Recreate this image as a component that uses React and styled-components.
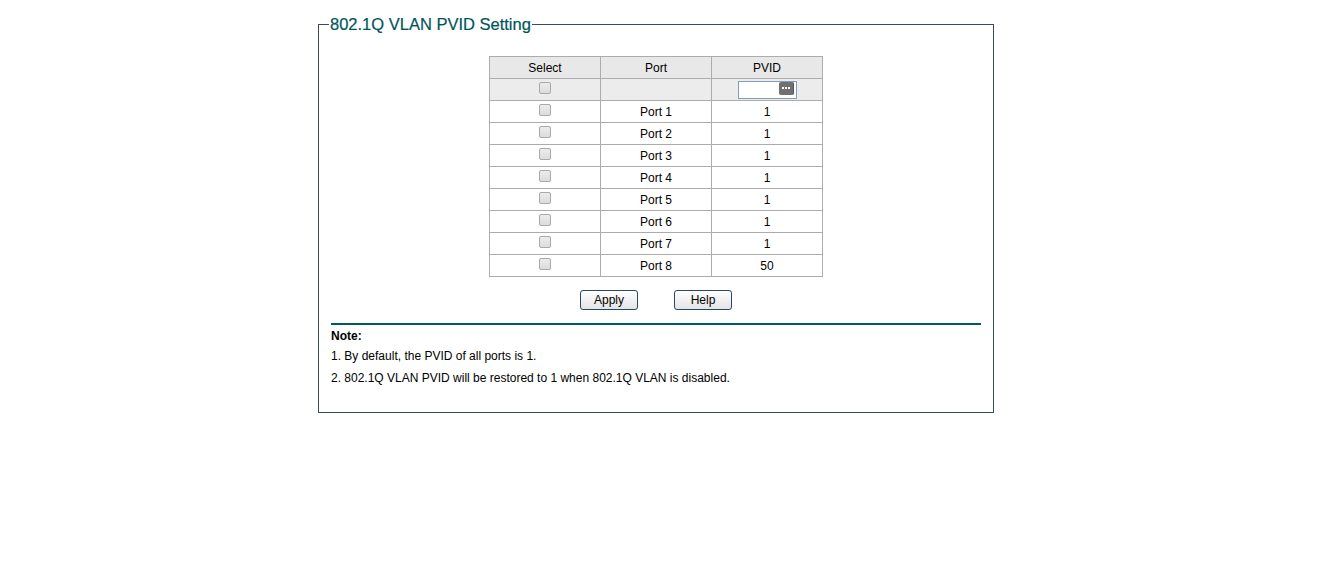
import styled, { createGlobalStyle } from "styled-components";

const GlobalStyle = createGlobalStyle`
  body {
    margin: 0;
    background: #ffffff;
    font-family: "Liberation Sans", Arial, sans-serif;
    font-size: 12px;
    color: #000000;
  }
`;

const Page = styled.div`
  padding: 14px 0 0 318px;
`;

const Panel = styled.fieldset`
  box-sizing: border-box;
  width: 676px;
  margin: 0;
  padding: 0 12px 23px;
  border: 1px solid #3c4a55;
`;

const Legend = styled.legend`
  margin-left: -2px;
  padding: 0 1px;
  font-size: 16.5px;
  line-height: 20px;
  color: #00555c;
  -webkit-text-stroke: 0.2px #00555c;
`;

const TableWrap = styled.div`
  display: flex;
  justify-content: center;
  padding-top: 22px;
`;

const Table = styled.table`
  width: 334px;
  border-collapse: collapse;
  table-layout: fixed;
`;

const Cell = styled.td`
  height: 21px;
  padding: 0;
  border: 1px solid #acacac;
  text-align: center;
  vertical-align: middle;
  line-height: 14px;
  background: ${(props) => (props.$shade ? "#ececec" : "#ffffff")};
`;

const HeadCell = styled(Cell).attrs({ as: "th" })`
  font-weight: normal;
  background: #e8e8e8;
`;

const Check = styled.span`
  display: inline-block;
  box-sizing: border-box;
  width: 12px;
  height: 12px;
  margin-top: -4px;
  vertical-align: middle;
  border: 1px solid #a9a9a9;
  border-radius: 2px;
  background: linear-gradient(#ececec, #dcdcdc);
`;

const PvidInput = styled.span`
  display: inline-flex;
  justify-content: flex-end;
  align-items: flex-start;
  box-sizing: border-box;
  width: 59px;
  height: 18px;
  vertical-align: middle;
  border: 1px solid #7f9dbf;
  background: #ffffff;
  padding: 0 2px 0 0;
`;

const DotsKey = styled.span`
  display: flex;
  align-items: center;
  justify-content: center;
  gap: 1px;
  width: 14px;
  height: 13px;
  border-radius: 2px;
  background: #707070;
  border-right: 1px solid #555555;

  & > i {
    width: 2px;
    height: 2px;
    background: #ffffff;
  }
`;

const Buttons = styled.div`
  display: flex;
  justify-content: center;
  gap: 36px;
  margin-top: 13px;
`;

const Button = styled.button`
  box-sizing: border-box;
  width: 58px;
  height: 20px;
  padding: 0;
  border: 1px solid #28476a;
  border-radius: 3px;
  background: linear-gradient(#ffffff, #e4e4e4);
  font-family: "Liberation Sans", Arial, sans-serif;
  font-size: 12px;
  color: #000000;
`;

const Rule = styled.div`
  height: 2px;
  margin-top: 13px;
  background: #005a62;
`;

const NoteTitle = styled.div`
  margin-top: 2px;
  font-weight: bold;
  line-height: 18px;
`;

const NoteLine = styled.div`
  line-height: 22px;
`;

const ports = [1, 1, 1, 1, 1, 1, 1, 50];

export default function App() {
  return (
    <Page>
      <GlobalStyle />
      <Panel>
        <Legend>802.1Q VLAN PVID Setting</Legend>
        <TableWrap>
          <Table>
            <thead>
              <tr>
                <HeadCell>Select</HeadCell>
                <HeadCell>Port</HeadCell>
                <HeadCell>PVID</HeadCell>
              </tr>
            </thead>
            <tbody>
              <tr>
                <Cell $shade>
                  <Check />
                </Cell>
                <Cell $shade />
                <Cell $shade>
                  <PvidInput>
                    <DotsKey>
                      <i />
                      <i />
                      <i />
                    </DotsKey>
                  </PvidInput>
                </Cell>
              </tr>
              {ports.map((pvid, i) => (
                <tr key={i}>
                  <Cell>
                    <Check />
                  </Cell>
                  <Cell>Port {i + 1}</Cell>
                  <Cell>{pvid}</Cell>
                </tr>
              ))}
            </tbody>
          </Table>
        </TableWrap>
        <Buttons>
          <Button>Apply</Button>
          <Button>Help</Button>
        </Buttons>
        <Rule />
        <NoteTitle>Note:</NoteTitle>
        <NoteLine>1. By default, the PVID of all ports is 1.</NoteLine>
        <NoteLine>
          2. 802.1Q VLAN PVID will be restored to 1 when 802.1Q VLAN is
          disabled.
        </NoteLine>
      </Panel>
    </Page>
  );
}
